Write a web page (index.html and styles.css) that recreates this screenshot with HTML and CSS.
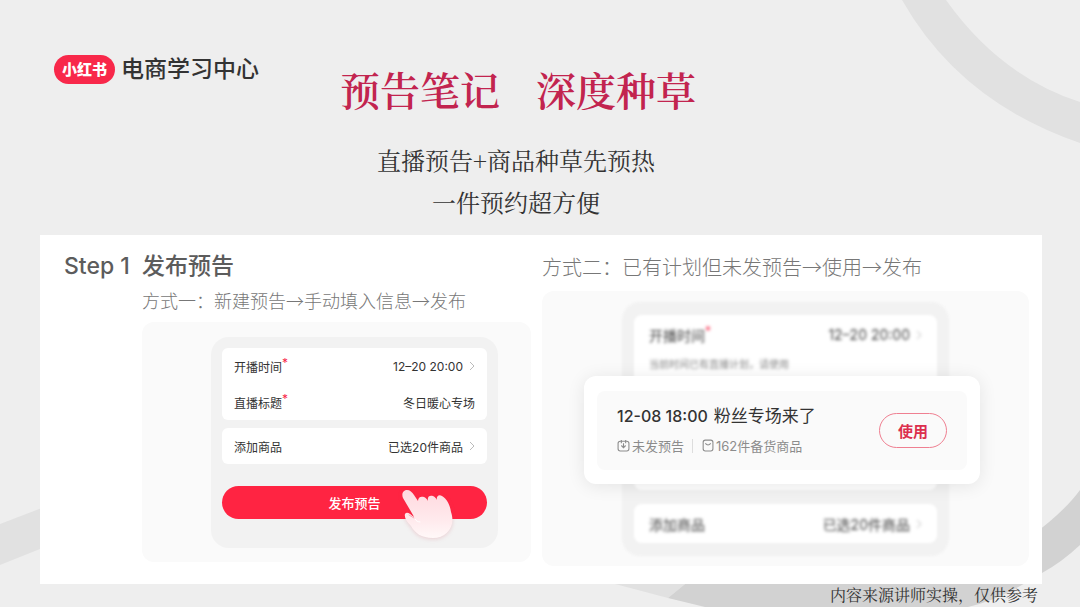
FILE: index.html
```html
<!DOCTYPE html>
<html lang="zh-CN">
<head>
    <meta charset="UTF-8">
    <meta name="viewport" content="width=device-width, initial-scale=1.0">
    <title>预告笔记 深度种草</title>
    <link rel="stylesheet" href="styles.css">
</head>
<body>
    <div class="slide">
        <svg class="backdrop" viewBox="0 0 1080 607" preserveAspectRatio="none" aria-hidden="true">
            <path fill="#e1e1e1" d="M902 0 Q960 102 1080 143 V102 Q1000 76 946 0Z"/>
            <path fill="#e1e1e1" d="M0 524 L60 501 V541 L0 565Z"/>
            <path fill="#e1e1e1" d="M600 580 H690 L668 598 Z"/>
            <path fill="#d2d2d2" d="M1080 490 Q1064 512 1030 537 V584 L690 580 L668 598 L705 607 H968 Q1000 600 1042 573 Q1062 562 1080 545Z"/>
        </svg>

        <div class="content">
            <header class="header">
                <div class="brand">
                    <span class="brand-badge">小红书</span>
                    <span class="brand-name">电商学习中心</span>
                </div>
                <div class="headline">
                    <h1><span>预告笔记</span><span>深度种草</span></h1>
                    <div class="subtitle">
                        <p>直播预告+商品种草先预热</p>
                        <p>一件预约超方便</p>
                    </div>
                </div>
            </header>

            <main class="panel">
                <section class="method-one">
                    <h2 class="step">Step 1</h2>
                    <h2 class="step">发布预告</h2>
                    <p class="method-title">方式一：新建预告→手动填入信息→发布</p>
                    <div class="stage">
                        <div class="phone">
                            <div class="card">
                                <div class="row">
                                    <span>开播时间<sup>*</sup></span>
                                    <span class="value">12–20 20:00<svg class="chevron" viewBox="0 0 6 10"><path d="M1 1l4 4-4 4"/></svg></span>
                                </div>
                                <div class="row">
                                    <span>直播标题<sup>*</sup></span>
                                    <span class="value">冬日暖心专场</span>
                                </div>
                            </div>
                            <div class="card">
                                <div class="row">
                                    <span>添加商品</span>
                                    <span class="value">已选20件商品<svg class="chevron" viewBox="0 0 6 10"><path d="M1 1l4 4-4 4"/></svg></span>
                                </div>
                            </div>
                            <div class="publish-wrap">
                                <button class="publish">发布预告</button>
                                <svg class="hand" viewBox="0 0 54 54" aria-hidden="true">
                                    <defs>
                                        <linearGradient id="skin" x1="0" y1="0" x2="0" y2="1">
                                            <stop offset="0" stop-color="#ffd9df"/>
                                            <stop offset="0.6" stop-color="#ffe9ec"/>
                                            <stop offset="1" stop-color="#fff8f8"/>
                                        </linearGradient>
                                    </defs>
                                    <path fill="url(#skin)" d="M2 10 C0 5 3 2 6 2 C9 2 11 4 13 7 L17 13 C17 9 20 8 23 9 C25 10 26 11 27 13 C26 8 29 7 32 8 C34 9 35 10 36 12 C35 8 38 6 41 8 C46 11 49 17 50 24 C55 38 46 50 32 50 C20 50 14 45 10 38 C6 34 3 30 4 26 C6 23 9 26 13 29 L12 27 Z"/>
                                    <path fill="none" stroke="#f7a9b5" stroke-linecap="round" d="M8 27 L13 30"/>
                                    <path fill="none" stroke="#fff" stroke-linecap="round" d="M14 31 C15 33 17 34 19 34"/>
                                </svg>
                            </div>
                        </div>
                    </div>
                </section>

                <section class="method-two">
                    <p class="method-title large">方式二：已有计划但未发预告→使用→发布</p>
                    <div class="stage tall">
                        <div class="phone back">
                            <div class="card long">
                                <div class="row">
                                    <span>开播时间<sup>*</sup></span>
                                    <span class="value">12–20 20:00<svg class="chevron" viewBox="0 0 6 10"><path d="M1 1l4 4-4 4"/></svg></span>
                                </div>
                                <p class="hint">当前时间已有直播计划，请使用</p>
                            </div>
                            <div class="card">
                                <div class="row">
                                    <span>添加商品</span>
                                    <span class="value">已选20件商品<svg class="chevron" viewBox="0 0 6 10"><path d="M1 1l4 4-4 4"/></svg></span>
                                </div>
                            </div>
                        </div>
                        <div class="popup">
                            <div class="plan">
                                <div>
                                    <h3><span class="date">12-08 18:00</span><span>粉丝专场来了</span></h3>
                                    <p class="meta">
                                        <svg viewBox="0 0 12 12"><rect x="1" y="2" width="10" height="9" rx="2"/><path d="M4 1v3M8 1v3M4 6l2 2 2-2M6 4v4"/></svg>
                                        <span>未发预告</span>
                                        <i class="divider"></i>
                                        <svg viewBox="0 0 12 12"><rect x="2" y="1" width="9" height="10" rx="2"/><path d="M4 4q2.500 3 5 0"/></svg>
                                        <span>162件备货商品</span>
                                    </p>
                                </div>
                                <button class="use">使用</button>
                            </div>
                        </div>
                    </div>
                </section>
            </main>

            <footer class="source">内容来源讲师实操，仅供参考</footer>
        </div>
    </div>
</body>
</html>
```

FILE: styles.css
```css
* {
    box-sizing: border-box;
}
body {
    margin: 0;
    background-color: #eee;
    color: #333;
    font-family: Inter, "Noto Sans CJK SC", sans-serif;
}
h1, h2, h3, p {
    margin: 0;
    font-weight: 400;
}
button {
    font-family: inherit;
    cursor: pointer;
}
.slide {
    display: grid;
    min-height: 100vh;
    overflow: hidden;
}
.backdrop, .content {
    grid-area: 1 / 1;
    min-width: 0;
}
.backdrop {
    width: 100%;
    height: 100%;
    min-height: 0;
    contain: size;
}
.content {
    position: relative;
}

/* header */
.header {
    display: grid;
    grid-template-columns: 1fr auto 1fr;
    padding: 53px 98px 12px 54px;
}
.brand {
    display: flex;
    align-items: center;
    gap: 6px;
    height: 32px;
}
.brand-badge {
    padding: 0 8px;
    border-radius: 15px;
    background-color: #f8284a;
    color: #fff;
    font-size: 15px;
    font-weight: 900;
    line-height: 29px;
    white-space: nowrap;
}
.brand-name {
    font-size: 23px;
    font-weight: 500;
    line-height: 32px;
    white-space: nowrap;
}
.headline {
    padding-top: 6px;
    font-family: "Noto Serif CJK SC", "Noto Sans CJK SC", serif;
    text-align: center;
}
.headline h1 {
    display: flex;
    justify-content: center;
    gap: 36px;
    margin-bottom: 20px;
    color: #c2244f;
    font-size: 40px;
    font-weight: 600;
    line-height: 60px;
}
.subtitle {
    padding-right: 4px;
    font-size: 24px;
    line-height: 42px;
}

/* white panel */
.panel {
    display: grid;
    grid-template-columns: 467fr 487fr;
    gap: 11px;
    margin: 0 38px 0 40px;
    padding: 0 13px 18px 24px;
    background-color: #fff;
}
.method-one {
    display: grid;
    grid-template-columns: 66px 1fr;
    grid-template-rows: 50px 31px auto;
    align-content: start;
    column-gap: 12px;
    padding-top: 6px;
}
.step {
    color: #5c5c5c;
    font-size: 23px;
    font-weight: 500;
    line-height: 50px;
    white-space: nowrap;
}
.method-title {
    grid-column: 2;
    color: #777;
    font-family: "Noto Sans CJK SC", sans-serif;
    font-size: 18px;
    font-weight: 300;
    line-height: 18px;
    white-space: nowrap;
}
.method-title.large {
    font-size: 20px;
    line-height: 64px;
    height: 56px;
}
.stage {
    grid-column: 2;
    padding: 15px 33px 14px 69px;
    border-radius: 12px;
    background-color: #fafafa;
}
.phone {
    display: flex;
    flex-direction: column;
    gap: 8px;
    padding: 11px 11px 29px;
    border-radius: 18px;
    background-color: #f2f2f2;
}
.card {
    padding: 0 12px;
    border-radius: 6px;
    background-color: #fff;
}
.row {
    display: flex;
    align-items: center;
    justify-content: space-between;
    height: 36px;
    font-size: 12px;
}
.row sup {
    color: #f8284a;
    font-size: 12px;
    line-height: 0;
}
.value {
    display: flex;
    align-items: center;
}
.chevron {
    width: 6px;
    height: 10px;
    margin-left: 6px;
    fill: none;
    stroke: #bbb;
}
.publish-wrap {
    position: relative;
    margin-top: 14px;
}
.publish {
    display: block;
    width: 100%;
    height: 33px;
    border: 0;
    border-radius: 17px;
    background-color: #ff2442;
    color: #fff;
    font-size: 13px;
    font-weight: 500;
}
.hand {
    position: absolute;
    top: 2px;
    right: 32px;
    width: 54px;
    height: 54px;
    filter: drop-shadow(0 1px 2px rgba(200, 60, 80, 0.2));
}

/* second method */
.stage.tall {
    position: relative;
    padding: 11px 80px 10px;
}
.back {
    gap: 14px;
    padding: 13px 12px;
    filter: blur(1px);
}
.back .card {
    padding: 0 15px;
    border-radius: 8px;
}
.back .row {
    height: 39px;
    color: #444;
    font-size: 14px;
    filter: blur(1px);
}
.back .long {
    height: 175px;
}
.hint {
    color: #888;
    font-size: 10px;
    line-height: 20px;
    filter: blur(1px);
}
.popup {
    position: absolute;
    top: 85px;
    left: 42px;
    right: 49px;
    padding: 15px 13px 14px;
    border-radius: 12px;
    background-color: #fff;
    box-shadow: 0 2px 18px rgba(0, 0, 0, 0.09);
}
.plan {
    display: flex;
    align-items: center;
    justify-content: space-between;
    height: 79px;
    padding: 0 20px;
    border-radius: 8px;
    background-color: #fafafa;
}
.plan h3 {
    display: flex;
    gap: 6px;
    font-size: 17px;
    line-height: 30px;
    white-space: nowrap;
}
.date {
    font-size: 16px;
    font-weight: 500;
}
.meta {
    display: flex;
    align-items: center;
    gap: 2px;
    color: #8c8c8c;
    font-size: 13px;
    line-height: 30px;
    white-space: nowrap;
}
.meta svg {
    width: 13px;
    height: 13px;
    fill: none;
    stroke: #8c8c8c;
}
.divider {
    width: 1px;
    height: 14px;
    margin: 0 6px;
    background-color: #ddd;
}
.use {
    width: 68px;
    height: 35px;
    padding: 0;
    border: 1px solid #ef7f91;
    border-radius: 18px;
    background-color: transparent;
    color: #dc2f4d;
    font-size: 15px;
    font-weight: 700;
}

.source {
    padding-right: 42px;
    font-family: "Noto Serif CJK SC", "Noto Sans CJK SC", serif;
    font-size: 16px;
    line-height: 22px;
    text-align: right;
}
```
